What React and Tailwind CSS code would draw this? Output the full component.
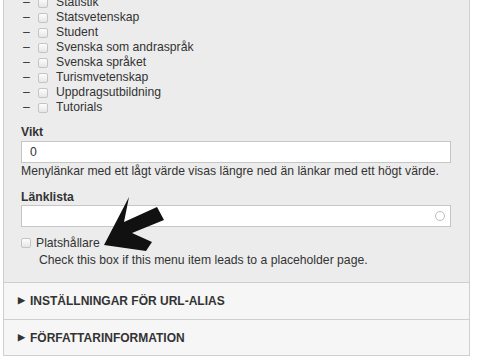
import React from 'react';

const terms = [
    'Statistik',
    'Statsvetenskap',
    'Student',
    'Svenska som andraspråk',
    'Svenska språket',
    'Turismvetenskap',
    'Uppdragsutbildning',
    'Tutorials',
];

const Box = ({ className = '' }) => (
    <span className={`inline-block w-[10px] h-[10px] rounded-[2px] border border-[#c4c4c4] bg-gradient-to-b from-[#fdfdfd] to-[#e6e6e6] ${className}`}></span>
);

const Arrow = () => (
    <svg className="absolute left-[100px] top-[194px]" width="70" height="60" viewBox="100 194 70 60">
        <polygon
            points="104,245 129,197 124,222 157,207 164,220 132,233 152,242 146,251"
            fill="#111"
        />
    </svg>
);

const App = () => {
    return (
        <div className="relative w-[478px] h-[362px] bg-white overflow-hidden text-[#333] text-[12.2px]" style={{ fontFamily: '"Liberation Sans", Arial, sans-serif' }}>
            <div className="ml-[3px] w-[467px] border-x border-b border-[#cfcfcf]">
                {/* Meny-inställningar */}
                <div className="bg-[#ececec] pl-[17px] pr-[18px] pb-[14px] pt-[1px] mt-[-6px]">
                    <ul>
                        {terms.map((t) => (
                            <li key={t} className="flex items-center h-[15px] leading-[15px]">
                                <span className="w-[17px] pl-[2px]">–</span>
                                <Box />
                                <span className="ml-[8px]">{t}</span>
                            </li>
                        ))}
                    </ul>

                    <div className="mt-[9px]">
                        <div className="font-bold leading-[16px]">Vikt</div>
                        <div className="mt-[1px] h-[22px] bg-white border border-[#c6c6c6] flex items-center pl-[8px]">0</div>
                        <div className="leading-[16px]">Menylänkar med ett lågt värde visas längre ned än länkar med ett högt värde.</div>
                    </div>

                    <div className="mt-[10px]">
                        <div className="font-bold leading-[16px]">Länklista</div>
                        <div className="h-[22px] bg-white border border-[#c6c6c6] flex items-center justify-end pr-[5px]">
                            <span className="w-[10px] h-[10px] rounded-full border-[1.5px] border-[#bdbdbd]"></span>
                        </div>
                    </div>

                    <div className="mt-[8px] flex items-center leading-[16px]">
                        <Box />
                        <span className="ml-[5px]">Platshållare</span>
                    </div>
                    <div className="pl-[18px] mt-[1px] leading-[16px]">Check this box if this menu item leads to a placeholder page.</div>
                </div>

                {/* Hopfällda sektioner */}
                <div className="border-t border-[#cfcfcf] bg-[#f6f6f6] h-[37px] flex items-center pl-[14px] font-bold text-[12px]">
                    <span className="text-[9px] mr-[5px]">▶</span>INSTÄLLNINGAR FÖR URL-ALIAS
                </div>
                <div className="border-t border-[#cfcfcf] bg-[#f6f6f6] h-[36px] flex items-center pl-[14px] font-bold text-[12px]">
                    <span className="text-[9px] mr-[5px]">▶</span>FÖRFATTARINFORMATION
                </div>
            </div>
            <Arrow />
        </div>
    );
};

export default App;
